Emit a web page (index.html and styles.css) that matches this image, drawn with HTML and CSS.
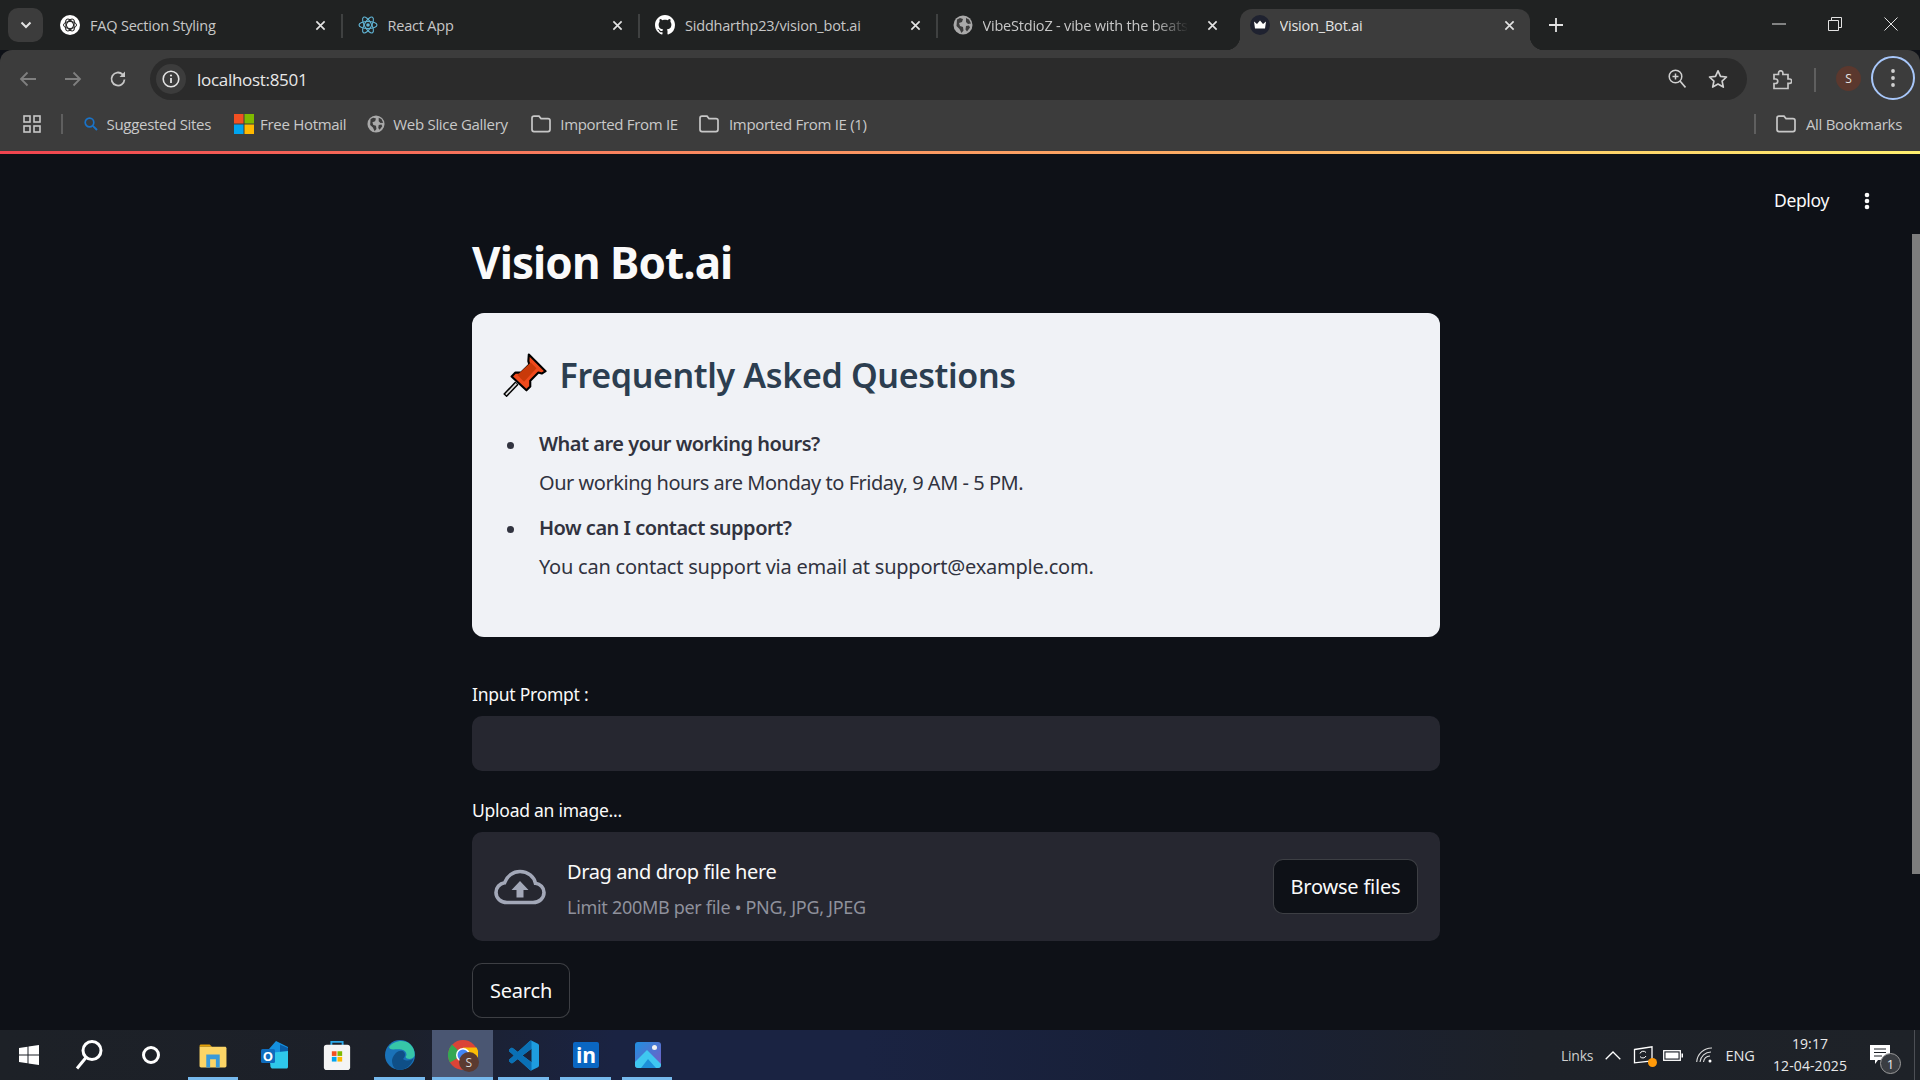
FILE: index.html
```html
<!DOCTYPE html>
<html lang="en">
<head>
<meta charset="utf-8">
<title>Vision_Bot.ai</title>
<link rel="stylesheet" href="styles.css">
</head>
<body>
<svg class="defs" width="0" height="0" aria-hidden="true">
  <symbol id="x" viewBox="0 0 12 12"><path d="M1.500 1.500l9 9M10.500 1.500l-9 9" fill="none" stroke="#e3e3e3" stroke-width="1.800"/></symbol>
  <symbol id="folder" viewBox="0 0 20 18"><path d="M1 3.200C1 2 1.900 1.200 3 1.200h5l2 2.400h7c1.100 0 2 .9 2 2v9c0 1.100-.9 2-2 2H3c-1.100 0-2-.9-2-2z" fill="none" stroke="#c7c7c7" stroke-width="1.700"/></symbol>
  <symbol id="globe" viewBox="0 0 20 20"><circle cx="10" cy="10" r="9.500" fill="#a9a9a9"/><path d="M4 4.500l3-1.500 3 1-1 3-3 1 1 3 3 1 .5 3.500-2 2.500-2-4-3-3zM13 3l3 1.500 2 4-3 .5-2-2zM13 11l3-.5 1 2-3 4-1.500-2z" fill="#3c3c3c"/></symbol>
</svg>

<header class="chrome">
  <div class="tabstrip">
    <div class="tabsearch"><svg width="12" height="8" viewBox="0 0 12 8"><path d="M1.500 1.500L6 6l4.500-4.500" fill="none" stroke="#e3e3e3" stroke-width="2"/></svg></div>
    <div class="tab">
      <svg class="fav" viewBox="0 0 20 20"><circle cx="10" cy="10" r="10" fill="#fff"/><g fill="none" stroke="#222" stroke-width="1"><ellipse cx="10" cy="10" rx="6.500" ry="3.500"/><ellipse cx="10" cy="10" rx="6.500" ry="3.500" transform="rotate(60 10 10)"/><ellipse cx="10" cy="10" rx="6.500" ry="3.500" transform="rotate(120 10 10)"/></g></svg>
      <span class="tabtitle">FAQ Section Styling</span>
      <svg class="tabx"><use href="#x"/></svg>
    </div>
    <i class="tabsep"></i>
    <div class="tab">
      <svg class="fav" viewBox="0 0 20 20"><g fill="none" stroke="#61b5d6" stroke-width="1.100"><ellipse cx="10" cy="10" rx="9" ry="3.500"/><ellipse cx="10" cy="10" rx="9" ry="3.500" transform="rotate(60 10 10)"/><ellipse cx="10" cy="10" rx="9" ry="3.500" transform="rotate(120 10 10)"/></g><circle cx="10" cy="10" r="1.800" fill="#61b5d6"/></svg>
      <span class="tabtitle">React App</span>
      <svg class="tabx"><use href="#x"/></svg>
    </div>
    <i class="tabsep"></i>
    <div class="tab">
      <svg class="fav" viewBox="0 0 16 16"><path fill="#fff" d="M8 0C3.580 0 0 3.580 0 8c0 3.540 2.290 6.530 5.470 7.590.4.070.55-.17.55-.38 0-.19-.01-.82-.01-1.490-2.010.37-2.530-.49-2.690-.94-.09-.23-.48-.94-.82-1.130-.28-.15-.68-.52-.01-.53.63-.01 1.080.58 1.230.82.72 1.210 1.870.87 2.330.66.070-.52.28-.87.51-1.070-1.780-.2-3.640-.89-3.640-3.950 0-.87.31-1.590.82-2.150-.08-.2-.36-1.020.08-2.120 0 0 .67-.21 2.200.82.64-.18 1.320-.27 2-.27.68 0 1.360.09 2 .27 1.530-1.040 2.200-.82 2.200-.82.44 1.100.16 1.920.08 2.120.51.56.82 1.270.82 2.150 0 3.070-1.870 3.750-3.650 3.950.29.25.54.73.54 1.480 0 1.070-.01 1.930-.01 2.200 0 .21.15.46.55.38A8.013 8.013 0 0016 8c0-4.420-3.580-8-8-8z"/></svg>
      <span class="tabtitle">Siddharthp23/vision_bot.ai</span>
      <svg class="tabx"><use href="#x"/></svg>
    </div>
    <i class="tabsep"></i>
    <div class="tab">
      <svg class="fav"><use href="#globe"/></svg>
      <span class="tabtitle fade">VibeStdioZ - vibe with the beats</span>
      <svg class="tabx"><use href="#x"/></svg>
    </div>
    <div class="tab active">
      <svg class="fav" viewBox="0 0 20 20"><circle cx="10" cy="10" r="10" fill="#1f2230"/><path d="M4 6.500l3 2.500 3-3.500 3 3.500 3-2.500-1 7H5z" fill="#fff"/></svg>
      <span class="tabtitle">Vision_Bot.ai</span>
      <svg class="tabx"><use href="#x"/></svg>
    </div>
    <svg class="newtab" width="14" height="14" viewBox="0 0 14 14"><path d="M7 0v14M0 7h14" stroke="#e3e3e3" stroke-width="1.800"/></svg>
    <div class="winctl">
      <svg width="14" height="14" viewBox="0 0 14 14"><path d="M0 7h14" stroke="#e3e3e3" stroke-width="1"/></svg>
      <svg width="14" height="14" viewBox="0 0 14 14"><path d="M.5 3.500h10v10H.5zM3.500 3.500V.5h10v10h-3" fill="none" stroke="#e3e3e3" stroke-width="1"/></svg>
      <svg width="14" height="14" viewBox="0 0 14 14"><path d="M.5.500l13 13M13.500.5l-13 13" stroke="#e3e3e3" stroke-width="1"/></svg>
    </div>
  </div>
  <div class="toolbar">
    <div class="navbtn"><svg width="18" height="16" viewBox="0 0 18 16"><path d="M17 8H2M8.500 1.500L2 8l6.500 6.500" fill="none" stroke="#7f7f7f" stroke-width="1.800"/></svg></div>
    <div class="navbtn"><svg width="18" height="16" viewBox="0 0 18 16"><path d="M1 8h15M9.500 1.500L16 8l-6.500 6.500" fill="none" stroke="#7f7f7f" stroke-width="1.800"/></svg></div>
    <div class="navbtn"><svg width="18" height="18" viewBox="0 0 18 18"><path d="M15.500 9.500a6.500 6.500 0 1 1-2-5.200L15.500 6" fill="none" stroke="#c7c7c7" stroke-width="1.800"/><path d="M16 1.500V7h-5.500z" fill="#c7c7c7"/></svg></div>
    <div class="omnibox">
      <div class="siteinfo"><svg width="18" height="18" viewBox="0 0 18 18"><circle cx="9" cy="9" r="7.800" fill="none" stroke="#e3e3e3" stroke-width="1.600"/><path d="M9 8v5" stroke="#e3e3e3" stroke-width="1.800"/><circle cx="9" cy="5.500" r="1.100" fill="#e3e3e3"/></svg></div>
      <span class="url">localhost:8501</span>
      <svg class="zoomglass" width="18" height="20" viewBox="0 0 18 20"><circle cx="7.500" cy="7.500" r="6.300" fill="none" stroke="#d0d0d0" stroke-width="1.500"/><path d="M4.500 7.500h6M7.500 4.500v6" stroke="#d0d0d0" stroke-width="1.500"/><path d="M12 12l5.500 6.500" stroke="#d0d0d0" stroke-width="1.700"/></svg>
      <svg class="star" width="20" height="20" viewBox="0 0 20 20"><path d="M10 1.800l2.500 5.500 6 .7-4.400 4.100 1.200 6L10 15.100l-5.300 3 1.200-6L1.500 8l6-.7z" fill="none" stroke="#d0d0d0" stroke-width="1.700" stroke-linejoin="round"/></svg>
    </div>
    <svg class="ext" width="20" height="20" viewBox="0 0 20 20"><path d="M2 5h4.500V3.500a2.200 2.200 0 0 1 4.400 0V5H16v4.500h1.500a2.200 2.200 0 0 1 0 4.400H16V19H2v-5h1.500a2.200 2.200 0 0 0 0-4.500H2z" transform="translate(0 -.5)" fill="none" stroke="#c7c7c7" stroke-width="1.700"/></svg>
    <i class="barsep"></i>
    <div class="avatar">S</div>
    <div class="menuring"><svg width="4" height="18" viewBox="0 0 4 18"><circle cx="2" cy="2" r="1.900" fill="#d0d0d0"/><circle cx="2" cy="9" r="1.900" fill="#d0d0d0"/><circle cx="2" cy="16" r="1.900" fill="#d0d0d0"/></svg></div>
  </div>
  <nav class="bookmarks">
    <svg class="apps" width="18" height="18" viewBox="0 0 18 18"><g fill="none" stroke="#c7c7c7" stroke-width="1.600"><rect x="1" y="1" width="6" height="6"/><rect x="11" y="1" width="6" height="6"/><rect x="1" y="11" width="6" height="6"/><rect x="11" y="11" width="6" height="6"/></g></svg>
    <i class="barsep tall"></i>
    <div class="bm bm1"><svg width="14" height="14" viewBox="0 0 14 14"><circle cx="5.500" cy="5.500" r="4.300" fill="none" stroke="#1a73c8" stroke-width="1.700"/><path d="M8.800 8.800L13 13" stroke="#1a73c8" stroke-width="1.900"/></svg><span>Suggested Sites</span></div>
    <div class="bm bm2"><svg width="20" height="20" viewBox="0 0 20 20"><path fill="#f25022" d="M0 0h9.500v9.500H0z"/><path fill="#7fba00" d="M10.500 0H20v9.500h-9.500z"/><path fill="#00a4ef" d="M0 10.500h9.500V20H0z"/><path fill="#ffb900" d="M10.500 10.500H20V20h-9.500z"/></svg><span>Free Hotmail</span></div>
    <div class="bm bm3"><svg width="18" height="18"><use href="#globe"/></svg><span>Web Slice Gallery</span></div>
    <div class="bm bm4"><svg width="20" height="18"><use href="#folder"/></svg><span>Imported From IE</span></div>
    <div class="bm bm5"><svg width="20" height="18"><use href="#folder"/></svg><span>Imported From IE (1)</span></div>
    <i class="barsep tall end"></i>
    <div class="bm bm6"><svg width="20" height="18"><use href="#folder"/></svg><span>All Bookmarks</span></div>
  </nav>
  <div class="rainbow"></div>
</header>

<div class="viewport">
  <div class="stheader">
    <span class="deploy">Deploy</span>
    <svg width="6" height="18" viewBox="0 0 6 18"><circle cx="3" cy="3" r="2.300" fill="#fafafa"/><circle cx="3" cy="9" r="2.300" fill="#fafafa"/><circle cx="3" cy="15" r="2.300" fill="#fafafa"/></svg>
  </div>
  <div class="scrollthumb"></div>
  <main class="column">
    <h1 class="title">Vision Bot.ai</h1>
    <section class="faq">
      <h2 class="faqhead">
        <svg width="44" height="44" viewBox="0 0 46 46"><path d="M27 1.500L44.500 19l-4 2.500-3.500-1-8.500 8.500 0 6-4 4L9 24.500l4-4 6 0L27.500 12l-1-3.500z" fill="#f04a1c" stroke="#000" stroke-width="2.200" stroke-linejoin="round"/><path d="M15 23l14-13 6 6-13 14z" fill="#c93a0a"/><path d="M14.500 31.500L2 44.500" stroke="#000" stroke-width="5"/><path d="M14 32L3 43.500" stroke="#ddd" stroke-width="1.800"/></svg>
        <span>Frequently Asked Questions</span>
      </h2>
      <ul class="qa">
        <li><strong>What are your working hours?</strong><p class="a1">Our working hours are Monday to Friday, 9 AM - 5 PM.</p></li>
        <li><strong>How can I contact support?</strong><p class="a2">You can contact support via email at support@example.com.</p></li>
      </ul>
    </section>
    <label class="fieldlabel first">Input Prompt :</label>
    <div class="textinput"></div>
    <label class="fieldlabel second">Upload an image...</label>
    <div class="dropzone">
      <svg class="cloud" width="52" height="36" viewBox="0 0 52 36"><path d="M13 33.500C6.500 33.500 2 29 2 23.500c0-5 3.700-9 8.500-9.700C13 7 19 2.500 26 2.500c8 0 14 5.200 15.500 11.800 4.700.6 8.500 4.400 8.500 9.200 0 5.500-4.500 10-11 10z" fill="none" stroke="#a3a8b8" stroke-width="3.600"/><path d="M26 12l8.500 9H29.500v7.500h-7V21H17.500z" fill="#a3a8b8"/></svg>
      <div class="droptext">
        <div class="dropmain">Drag and drop file here</div>
        <div class="dropsub">Limit 200MB per file • PNG, JPG, JPEG</div>
      </div>
      <div class="btn browse">Browse files</div>
    </div>
    <div class="btn search">Search</div>
  </main>
</div>

<footer class="taskbar">
  <div class="tb tb-win"><svg width="20" height="20" viewBox="0 0 20 20"><path fill="#fff" d="M0 3l8.500-1.200v7.700H0zM9.500 1.600L20 0v9.500H9.500zM0 10.500h8.500v7.700L0 17zM9.500 10.500H20V20L9.500 18.400z"/></svg></div>
  <div class="tb"><svg width="28" height="32" viewBox="0 0 28 32"><circle cx="17" cy="11.500" r="9" fill="none" stroke="#fff" stroke-width="3"/><path d="M11 18.500L2 29.500" stroke="#fff" stroke-width="3"/></svg></div>
  <div class="tb"><svg width="20" height="20" viewBox="0 0 20 20"><circle cx="10" cy="10" r="7.500" fill="none" stroke="#fff" stroke-width="3"/></svg></div>
  <div class="tb on nudge"><svg width="28" height="25" viewBox="0 0 28 26"><path d="M0 3c0-.8.700-1.500 1.500-1.500h9L13 4H0z" fill="#e3a008"/><path d="M0 4h26.500c.8 0 1.500.7 1.500 1.500V24c0 .8-.7 1.500-1.500 1.500h-25C.7 25.500 0 24.800 0 24z" fill="#fcd566"/><path d="M7 12h14v13.500h-4V17h-6v8.500H7z" fill="#3a9ad9"/></svg></div>
  <div class="tb"><svg width="30" height="30" viewBox="0 0 30 30"><path d="M16 1l12 6v4L9 21V9z" fill="#1490df"/><path d="M20 4.500l8 3.500v10l-8-3z" fill="#0a5ea8"/><path d="M9 13l19-2v16c0 .8-.7 1.500-1.500 1.500h-14c-1 0-1.500-.6-2-1.500z" fill="#2ec8ea"/><rect x="1" y="9" width="14" height="14" rx="1.500" fill="#0f6cbd"/><text class="tbo" x="8" y="20.500">O</text></svg></div>
  <div class="tb"><svg width="28" height="30" viewBox="0 0 28 32"><path d="M8 7V2h12v5" fill="none" stroke="#2aa7e8" stroke-width="2"/><rect x="0" y="5" width="28" height="27" rx="3" fill="#f4f4f4"/><path fill="#f25022" d="M8.500 12h5v5h-5z"/><path fill="#7fba00" d="M14.500 12h5v5h-5z"/><path fill="#00a4ef" d="M8.500 18h5v5h-5z"/><path fill="#ffb900" d="M14.500 18h5v5h-5z"/></svg></div>
  <div class="tb on nudge"><svg width="30" height="30" viewBox="0 0 30 30"><circle cx="15" cy="15" r="15" fill="#1a72b8"/><path d="M4 7C8 1.500 18-1.500 25 4c4 3.500 5 8.500 4.500 12-2 4-8 3.500-9 1 2-2 1-6.500-4-7.500C10 8.500 5 11 4 7z" fill="#36c6a8"/><path d="M7 20c2-8 9-11 12-8 2.500 3-.5 7-1 7 4 3 9 1 10.500-1-1.500 7-8 12-13.500 12S7 26 7 20z" fill="#0f4f87"/></svg></div>
  <div class="tb on cur nudge"><svg width="30" height="30" viewBox="0 0 30 30"><circle cx="15" cy="15" r="15" fill="#db4437"/><path d="M15 15L2 22.500A15 15 0 0 1 4 4.500z" fill="#34a853"/><path d="M15 7.500h13.500A15 15 0 0 1 15 30z" fill="#fbbc05"/><circle cx="15" cy="15" r="7" fill="#fff"/><circle cx="15" cy="15" r="5.500" fill="#4285f4"/></svg><div class="chromebadge">S</div></div>
  <div class="tb on"><svg width="30" height="31" viewBox="0 0 24 24"><path fill="#1e9de0" d="M23.150 2.587L18.210.21a1.494 1.494 0 0 0-1.705.29l-9.460 8.630-4.120-3.128a.999.999 0 0 0-1.276.057L.327 7.261A1 1 0 0 0 .326 8.740L3.899 12 .326 15.260a1 1 0 0 0 .001 1.479L1.650 17.940a.999.999 0 0 0 1.276.057l4.120-3.128 9.460 8.630a1.492 1.492 0 0 0 1.704.29l4.942-2.377A1.500 1.500 0 0 0 24 20.060V3.939a1.500 1.500 0 0 0-.85-1.352zm-5.146 14.861L10.826 12l7.178-5.448v10.896z"/><path fill="#0a70b5" d="M18 .1a1.500 1.500 0 0 0-1.495.4l-9.460 8.630-4.120-3.128a.999.999 0 0 0-1.276.057L.327 7.261A1 1 0 0 0 .326 8.740L3.899 12 .326 15.260a1 1 0 0 0 .001 1.479L1.650 17.940a.999.999 0 0 0 1.276.057l4.120-3.128 9.460 8.630A1.500 1.500 0 0 0 18 23.900v-6.450L10.826 12 18 6.552z"/></svg></div>
  <div class="tb on"><svg width="26" height="26" viewBox="0 0 26 26"><rect width="26" height="26" rx="2" fill="#0a66c2"/><text class="tbin" x="13" y="21">in</text></svg></div>
  <div class="tb on"><svg width="26" height="26" viewBox="0 0 26 26"><defs><linearGradient id="ph" x1="0" y1="0" x2="1" y2="1"><stop offset="0" stop-color="#1f8fe0"/><stop offset="1" stop-color="#7a5bc2"/></linearGradient></defs><rect width="26" height="26" rx="3" fill="url(#ph)"/><circle cx="19.500" cy="5.500" r="2.500" fill="#f2f2f2"/><path d="M0 20L12 8l14 14v1a3 3 0 0 1-3 3H3a3 3 0 0 1-3-3z" fill="#3fc7f0"/><path d="M6 26l7-9 8 9z" fill="#1e8fd8"/></svg></div>
  <div class="tray">
    <span class="links">Links</span>
    <svg class="chev" width="16" height="9" viewBox="0 0 16 9"><path d="M.7 8.300L8 1l7.300 7.300" fill="none" stroke="#fff" stroke-width="1.300"/></svg>
    <div class="upd"><svg width="20" height="18" viewBox="0 0 20 18"><path d="M1.500 3.500L19 .8v14l-17.500 2z" fill="none" stroke="#fff" stroke-width="1.300"/><path d="M13 6.500a3.500 3.500 0 0 0-6 1M7 10.500a3.500 3.500 0 0 0 6-.5" fill="none" stroke="#fff" stroke-width="1"/></svg><i class="dot"></i></div>
    <svg class="batt" width="20" height="11" viewBox="0 0 20 11"><rect x=".7" y=".7" width="16.600" height="9.600" fill="none" stroke="#fff" stroke-width="1.300"/><rect x="2.500" y="2.500" width="13" height="6" fill="#fff"/><path d="M18.500 3.500h1.500v4h-1.500z" fill="#fff"/></svg>
    <svg class="wifi" width="18" height="16" viewBox="0 0 18 16"><g fill="none" stroke="#ddd" stroke-width="1.100"><path d="M.7 15A15 15 0 0 1 16 1"/><path d="M4 15A11 11 0 0 1 15 5"/><path d="M7.500 15A7 7 0 0 1 14 9"/></g><circle cx="14" cy="14" r="1.500" fill="#fff"/></svg>
    <span class="lang">ENG</span>
    <div class="clock"><span>19:17</span><span>12-04-2025</span></div>
    <div class="notif"><svg width="20" height="20" viewBox="0 0 20 20"><path d="M0 0h20v15H8l-3 4v-4H0z" fill="#fff"/><path d="M4 4h12M4 7.500h12M4 11h8" stroke="#1c2026" stroke-width="1"/></svg><b class="count">1</b></div>
    <i class="showdesk"></i>
  </div>
</footer>
</body>
</html>
```

FILE: styles.css
```css
* { box-sizing: border-box; }
html, body { margin: 0; height: 100%; overflow: hidden; }
body { display: flex; flex-direction: column; background: #0e1117; font-family: "Noto Sans", sans-serif; color: #fafafa; }
.defs { position: absolute; }
i { display: block; }

/* browser chrome */
.chrome { flex: none; font-family: "Open Sans", sans-serif; }
.tabstrip { height: 50px; background: #202222; display: flex; align-items: flex-start; padding-left: 8px; }
.tabsearch { width: 35px; height: 34px; margin-top: 8px; margin-right: 2px; border-radius: 10px; background: #3c3c3c; display: flex; align-items: center; justify-content: center; }
.tab { width: 296.500px; height: 41px; margin-top: 9px; display: flex; align-items: center; padding: 0 0 9px 15px; position: relative; flex: none; }
.fav { width: 20px; height: 20px; flex: none; }
.tabtitle { margin-left: 10px; font-size: 14.500px; letter-spacing: -.2px; color: #c7c7c7; flex: 1; white-space: nowrap; overflow: hidden; min-width: 0; }
.fade { -webkit-mask-image: linear-gradient(90deg, #000 82%, transparent 98%); mask-image: linear-gradient(90deg, #000 82%, transparent 98%); }
.tabx { width: 11px; height: 11px; flex: none; margin: 0 16px 0 14px; }
.tabsep { width: 2px; height: 24px; margin-top: 14px; background: #3f4141; flex: none; margin-left: -1px; margin-right: 0; }
.tab.active { background: #3c3c3c; border-radius: 12px 12px 0 0; width: 290px; margin-left: 5.500px; padding-left: 10px; }
.tab.active .tabx { margin-right: 14.500px; }
.tab.active .tabtitle { color: #e3e3e3; }
.tab.active::before, .tab.active::after { content: ""; position: absolute; bottom: 0; width: 14px; height: 14px; }
.tab.active::before { left: -14px; background: radial-gradient(circle at 0 0, #202222 14px, #3c3c3c 14.500px); }
.tab.active::after { right: -14px; background: radial-gradient(circle at 100% 0, #202222 14px, #3c3c3c 14.500px); }
.newtab { margin: 18px 0 0 19px; flex: none; }
.winctl { margin-left: auto; display: flex; gap: 42px; padding: 17px 22px 0 0; }

.toolbar { height: 50px; background: #3c3c3c; border-radius: 12px 12px 0 0; margin-top: 0; display: flex; align-items: flex-end; padding-left: 5px; }
.navbtn { width: 45px; height: 42px; display: flex; align-items: center; justify-content: center; flex: none; }
.omnibox { margin-left: 10px; width: 1597px; height: 42px; border-radius: 21px; background: #2b2b2b; display: flex; align-items: center; padding-left: 6px; flex: none; }
.siteinfo { width: 30px; height: 30px; border-radius: 50%; background: #3c3c3c; display: flex; align-items: center; justify-content: center; }
.url { margin-left: 11px; font-size: 17px; letter-spacing: -.3px; color: #e8e8e8; flex: 1; }
.zoomglass { margin-right: 22px; }
.star { margin-right: 19px; }
.ext { align-self: center; margin: 10px 0 0 25px; flex: none; }
.barsep { width: 2px; height: 24px; background: #5f5f5f; flex: none; align-self: center; margin: 10px 0 0 22px; }
.avatar { width: 25px; height: 25px; margin: 0 0 9px 20px; border-radius: 50%; background: #5b382e; font-size: 12px; color: #e3e3e3; display: flex; align-items: center; justify-content: center; flex: none; }
.menuring { width: 44px; height: 44px; margin-left: 10px; border-radius: 50%; border: 2px solid #a8c7fa; display: flex; align-items: center; justify-content: center; flex: none; }

.bookmarks { height: 50.500px; background: #3c3c3c; display: flex; align-items: center; padding-left: 23px; font-size: 15px; letter-spacing: -.3px; color: #c9c9c9; padding-bottom: 2px; }
.apps { flex: none; }
.barsep.tall { margin: 0 0 0 19.500px; height: 20px; }
.bm { display: flex; align-items: center; white-space: nowrap; flex: none; }
.bm1 { margin-left: 21px; gap: 9px; }
.bm2 { margin-left: 23px; gap: 6px; }
.bm3 { margin-left: 20.500px; gap: 8.500px; }
.bm4 { margin-left: 23.500px; gap: 9px; }
.bm5 { margin-left: 21px; gap: 10px; }
.barsep.end { margin-left: auto; }
.bm6 { margin: 0 18px 0 20px; gap: 10px; }
.rainbow { height: 3.500px; background: linear-gradient(90deg, #f0444f 0%, #f9845f 33%, #fdb265 66%, #fff06f 100%); }

/* streamlit page */
.viewport { flex: 1; min-height: 0; position: relative; overflow: hidden; background: #0e1117; }
.stheader { position: absolute; top: 35px; right: 50px; display: flex; align-items: center; gap: 35px; }
.deploy { font-size: 17.500px; letter-spacing: -.35px; color: #fafafa; margin-top: -1px; }
.scrollthumb { position: absolute; top: 80px; right: 0; width: 8px; height: 640px; background: #7d7d7d; }
.column { width: 968px; margin: 0 0 0 472px; padding-top: 75px; }
.title { margin: 0; height: 66px; font-size: 44px; line-height: 66px; font-weight: 700; letter-spacing: -.92px; color: #fafafa; }
.faq { margin-top: 18px; height: 324px; border-radius: 12px; background: #f0f2f6; padding: 35px 32px 0 31px; color: #2c3e50; }
.faqhead { margin: 0; display: flex; align-items: center; gap: 12.500px; height: 54px; font-size: 34px; font-weight: 600; letter-spacing: -.35px; color: #2c3e50; }
.faqhead svg { flex: none; }
.qa { margin: 27px 0 0 -1px; padding: 0 0 0 37px; color: #31333f; list-style: none; font-size: 20px; letter-spacing: -.5px; line-height: 30px; }
.qa li { margin: 0 0 7px; position: relative; }
.qa li::before { content: ""; position: absolute; left: -32px; top: 13px; width: 7px; height: 7px; border-radius: 50%; background: #31333f; }
.qa strong { font-weight: 600; display: block; height: 39px; line-height: 30px; }
.qa p { margin: 0; height: 38px; line-height: 30px; }
.qa .a1 { letter-spacing: -.47px; }
.qa .a2 { letter-spacing: -.23px; }
.fieldlabel { display: block; height: 24px; font-size: 17.500px; line-height: 24px; letter-spacing: -.25px; color: #fafafa; }
.first { margin-top: 45px; }
.second { margin-top: 27px; }
.textinput { margin-top: 10px; height: 55px; border-radius: 10px; background: #262730; }
.dropzone { margin-top: 10px; height: 109px; border-radius: 10px; background: #262730; display: flex; align-items: center; padding: 0 22px; }
.cloud { flex: none; }
.droptext { margin-left: 21px; flex: 1; padding-top: 2px; }
.dropmain { font-size: 20px; line-height: 28px; letter-spacing: -.4px; color: #fafafa; margin-top: 1px; }
.dropsub { margin-top: 9px; font-size: 18px; line-height: 24px; letter-spacing: -.3px; color: #8f919c; }
.btn { height: 55px; border: 1px solid rgba(250,250,250,.2); border-radius: 10px; background: #0e1117; display: flex; align-items: center; justify-content: center; font-size: 20px; letter-spacing: -.2px; color: #fafafa; }
.browse { width: 145px; flex: none; }
.search { width: 98px; margin-top: 22px; }

/* windows taskbar */
.taskbar { flex: none; height: 50px; display: flex; align-items: center; background: linear-gradient(90deg, #1d2127 0%, #1c2029 20%, #1a2342 32%, #1a2342 45%, #182038 60%, #1d2128 80%, #1e2228 100%); font-family: "Open Sans", sans-serif; }
.tb { width: 61.700px; height: 50px; display: flex; align-items: center; justify-content: center; flex: none; position: relative; }
.tb-win { width: 58px; }
.nudge { margin-left: 1.200px; }
.tb.on::after { content: ""; position: absolute; left: 5px; right: 6px; bottom: 0; height: 3px; background: #76b9ed; }
.tb.cur { background: #4a5672; }
.tb.cur::after { left: 0; right: 0; }
.chromebadge { position: absolute; left: 27px; top: 22px; width: 20px; height: 20px; border-radius: 50%; background: #5b3a30; font-size: 12px; color: #d8d8d8; display: flex; align-items: center; justify-content: center; }
.tbo { font: 700 13px "Open Sans", sans-serif; fill: #fff; text-anchor: middle; }
.tbin { font: 700 21px "Open Sans", sans-serif; fill: #fff; text-anchor: middle; }
.tray { margin-left: auto; height: 50px; display: flex; align-items: center; color: #e8e8e8; font-size: 14px; }
.links { font-size: 14px; letter-spacing: -.3px; color: #cfcfcf; }
.chev { margin-left: 12px; }
.upd { position: relative; margin-left: 12px; width: 20px; height: 18px; }
.dot { position: absolute; right: -4px; bottom: -3px; width: 9px; height: 9px; border-radius: 50%; background: #ff9a0a; }
.batt { margin-left: 10px; }
.wifi { margin-left: 13px; }
.lang { margin-left: 11.500px; font-size: 14.500px; letter-spacing: -.2px; }
.clock { margin-left: 15.500px; width: 80px; display: flex; flex-direction: column; align-items: center; font-size: 14px; line-height: 22px; letter-spacing: .1px; white-space: nowrap; }
.notif { position: relative; margin-left: 20px; width: 20px; height: 20px; margin-right: 24px; }
.count { position: absolute; left: 10px; top: 8px; width: 21px; height: 21px; border-radius: 50%; background: #3a3d42; border: 1px solid #9a9a9a; font-size: 13px; font-weight: 400; display: flex; align-items: center; justify-content: center; }
.showdesk { width: 1px; height: 50px; background: #4c4f55; margin-right: 5px; }
```
